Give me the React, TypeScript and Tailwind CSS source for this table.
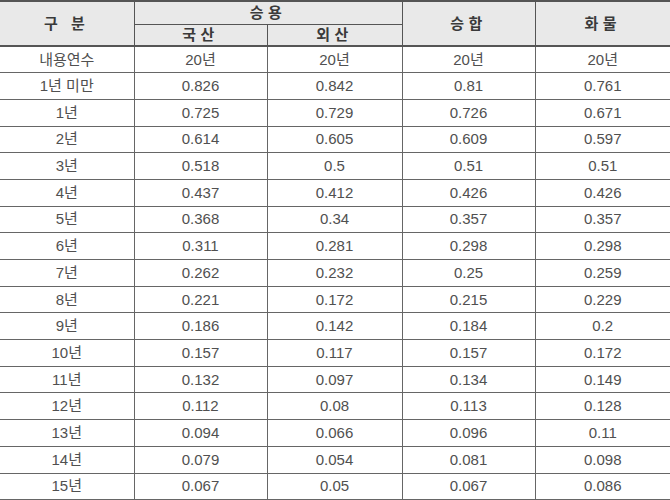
const rows: [string, string, string, string, string][] = [
  ['내용연수', '20년', '20년', '20년', '20년'],
  ['1년 미만', '0.826', '0.842', '0.81', '0.761'],
  ['1년', '0.725', '0.729', '0.726', '0.671'],
  ['2년', '0.614', '0.605', '0.609', '0.597'],
  ['3년', '0.518', '0.5', '0.51', '0.51'],
  ['4년', '0.437', '0.412', '0.426', '0.426'],
  ['5년', '0.368', '0.34', '0.357', '0.357'],
  ['6년', '0.311', '0.281', '0.298', '0.298'],
  ['7년', '0.262', '0.232', '0.25', '0.259'],
  ['8년', '0.221', '0.172', '0.215', '0.229'],
  ['9년', '0.186', '0.142', '0.184', '0.2'],
  ['10년', '0.157', '0.117', '0.157', '0.172'],
  ['11년', '0.132', '0.097', '0.134', '0.149'],
  ['12년', '0.112', '0.08', '0.113', '0.128'],
  ['13년', '0.094', '0.066', '0.096', '0.11'],
  ['14년', '0.079', '0.054', '0.081', '0.098'],
  ['15년', '0.067', '0.05', '0.067', '0.086'],
]

export default function App() {
  const th = 'bg-[#e9e9e9] border-[#555] font-bold text-[#3a3a3a] tracking-[0.3em] text-[15px] leading-[18px] p-0 text-center'
  return (
    <div className="w-[670px] h-[500px] bg-white overflow-hidden" style={{ fontFamily: '"Liberation Sans", "Noto Sans CJK KR", sans-serif' }}>
      <table className="w-full border-collapse table-fixed">
        <colgroup>
          <col className="w-[134px]" />
          <col className="w-[133px]" />
          <col className="w-[135px]" />
          <col className="w-[133px]" />
          <col className="w-[135px]" />
        </colgroup>
        <thead>
          <tr className="h-[23px]">
            <th rowSpan={2} className={`${th} border-t-2 border-b-2 border-r`}>구 분</th>
            <th colSpan={2} className={`${th} border-t-2 border-b border-r`}>승용</th>
            <th rowSpan={2} className={`${th} border-t-2 border-b-2 border-r`}>승합</th>
            <th rowSpan={2} className={`${th} border-t-2 border-b-2`}>화물</th>
          </tr>
          <tr className="h-[22px]">
            <th className={`${th} border-b-2 border-r`}>국산</th>
            <th className={`${th} border-b-2 border-r`}>외산</th>
          </tr>
        </thead>
        <tbody>
          {rows.map((r, i) => (
            <tr key={i} className="h-[26.7px]">
              {r.map((c, j) => (
                <td
                  key={j}
                  className={`border-b border-[#666] text-center text-[15px] leading-[18px] p-0 text-[#505050] ${j < 4 ? 'border-r' : ''}`}
                >
                  {c}
                </td>
              ))}
            </tr>
          ))}
        </tbody>
      </table>
    </div>
  )
}
